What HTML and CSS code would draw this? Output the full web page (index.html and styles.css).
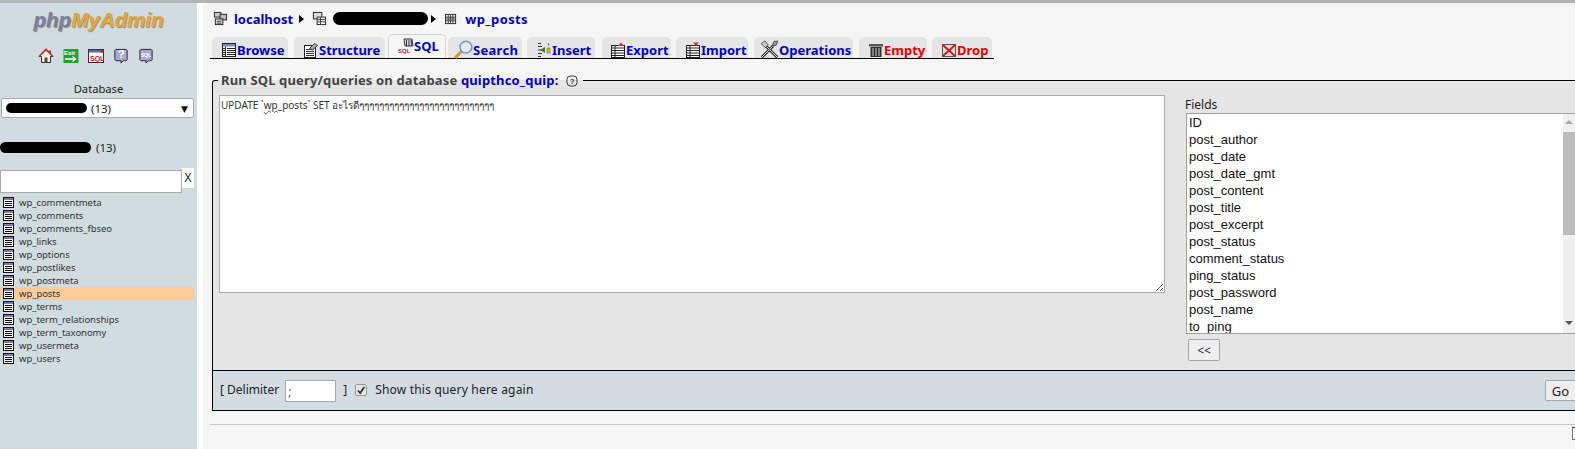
FILE: index.html
```html
<!DOCTYPE html>
<html lang="en">
<head>
<meta charset="utf-8">
<title>phpMyAdmin</title>
<link rel="stylesheet" href="styles.css">
</head>
<body>
<svg class="defs" width="0" height="0" aria-hidden="true">
  <symbol id="i-table" viewBox="0 0 11 11"><rect x=".5" y=".5" width="10" height="10" fill="#fff" stroke="#111"/><rect x="1" y="1" width="9" height="2" fill="#7a7ab4"/><path d="M2 4.500h7M2 6.500h7M2 8.500h7" stroke="#000"/></symbol>
  <symbol id="i-list" viewBox="0 0 16 16"><rect x="1.500" y="1.500" width="13" height="13" fill="#fff" stroke="#222"/><path d="M6 6.500h8M6 8.500h8M6 10.500h8M6 12.500h8M2 6.500h2M2 8.500h2M2 10.500h2M2 12.500h2" stroke="#222"/><path d="M4.500 4v10" stroke="#333"/><rect x="2" y="2" width="12" height="2.500" fill="#7c8fc0"/></symbol>
  <symbol id="i-bubble" viewBox="0 0 16 17"><path d="M2.500 1.500h11l1 1v10l-1 1h-3l-2.500 2.500v-2.500h-5.500l-1-1v-10z" fill="#a8a8d8" stroke="#222"/></symbol>
</svg>
<div class="page">
  <aside class="side">
    <div class="logo"><span class="php">php</span><span class="my">MyAdmin</span></div>
    <div class="tools">
      <svg class="tool" viewBox="0 0 16 16"><path d="M8 1.500 1 8.500h2.500v6h9v-6H15z" fill="#f4efe4" stroke="#333"/><path d="M11 2.500h2v3.500h-2z" fill="#8a3a2c"/><path d="M1.500 8 8 1.500 14.500 8" fill="none" stroke="#b8352a" stroke-width="1.700"/><rect x="6.500" y="9.500" width="3" height="5" fill="#5b4a34"/></svg>
      <svg class="tool" viewBox="0 0 16 16"><rect x=".5" y="1" width="15" height="14" fill="#1fa32f"/><text x="1" y="6.800" class="exit">Exit</text><path d="M2 11h10M9.500 8.500 12.500 11l-3 2.500" fill="none" stroke="#fff" stroke-width="1.300"/></svg>
      <svg class="tool" viewBox="0 0 16 16"><rect x=".5" y="1.500" width="15" height="13" fill="#fff" stroke="#333"/><rect x="1" y="2" width="14" height="2.500" fill="#5a6aa8"/><rect x="12.500" y="2" width="2.500" height="2.500" fill="#c0272d"/><text x="2" y="12.500" class="sqlt">SQL</text></svg>
      <svg class="tool" viewBox="0 0 16 17"><use href="#i-bubble"/><text x="4.500" y="11" class="helpt">?</text></svg>
      <svg class="tool" viewBox="0 0 16 17"><use href="#i-bubble"/><text x="2.300" y="9.500" class="bubt">SQL</text></svg>
    </div>
    <div class="db-label">Database</div>
    <div class="db-select"><span class="blob blob-sel"></span><span>(13)</span><span class="caret">▼</span></div>
    <div class="db-name"><span class="blob blob-db"></span><span>(13)</span></div>
    <div class="filter"><div class="filter-box"></div><div class="filter-x">X</div></div>
    <ul class="tables">
      <li><svg class="ti"><use href="#i-table"/></svg>wp_commentmeta</li>
      <li><svg class="ti"><use href="#i-table"/></svg>wp_comments</li>
      <li><svg class="ti"><use href="#i-table"/></svg>wp_comments_fbseo</li>
      <li><svg class="ti"><use href="#i-table"/></svg>wp_links</li>
      <li><svg class="ti"><use href="#i-table"/></svg>wp_options</li>
      <li><svg class="ti"><use href="#i-table"/></svg>wp_postlikes</li>
      <li><svg class="ti"><use href="#i-table"/></svg>wp_postmeta</li>
      <li class="on"><svg class="ti"><use href="#i-table"/></svg>wp_posts</li>
      <li><svg class="ti"><use href="#i-table"/></svg>wp_terms</li>
      <li><svg class="ti"><use href="#i-table"/></svg>wp_term_relationships</li>
      <li><svg class="ti"><use href="#i-table"/></svg>wp_term_taxonomy</li>
      <li><svg class="ti"><use href="#i-table"/></svg>wp_usermeta</li>
      <li><svg class="ti"><use href="#i-table"/></svg>wp_users</li>
    </ul>
  </aside>
  <main class="main">
    <div class="crumbs">
      <svg class="ci" viewBox="0 0 16 16"><rect x="1.500" y="1.500" width="7" height="5" fill="#ccc" stroke="#222"/><rect x="7.500" y="3.500" width="7" height="6" fill="#bbb" stroke="#222"/><rect x="2.500" y="8.500" width="8" height="6" fill="#ddd" stroke="#222"/><path d="M4 11h5M4 13h5" stroke="#333"/></svg>
      <a class="crumb">localhost</a><span class="sep"></span>
      <svg class="ci ci-db" viewBox="0 0 16 16"><rect x="1.500" y="1.500" width="9" height="7" fill="#ddd" stroke="#222"/><rect x="5.500" y="6.500" width="9" height="8" fill="#fff" stroke="#222"/><path d="M6 9h8M6 11.500h8M9 7v7" stroke="#333"/></svg>
      <span class="blob blob-crumb"></span><span class="sep sep2"></span>
      <svg class="ci ci-tb" viewBox="0 0 13 13"><rect x=".5" y="1.500" width="11" height="10" fill="#fff" stroke="#222"/><path d="M1 4.500h10M1 6.500h10M1 8.500h10M3.500 2v9M6 2v9M8.500 2v9" stroke="#333"/></svg>
      <a class="crumb crumb-wide">wp_posts</a>
    </div>
    <ul class="tabs">
      <li class="tab t-browse"><svg class="ic"><use href="#i-list"/></svg>Browse</li>
      <li class="tab t-struct"><svg class="ic" viewBox="0 0 16 16"><rect x="1.500" y="3.500" width="11" height="12" fill="#fff" stroke="#222"/><path d="M3 7.500h8M3 9.500h8M3 11.500h8M3 13.500h8" stroke="#333"/><path d="M6.500 6.500 11.500 1.500l3 2-5 4.500z" fill="#aaa" stroke="#222" stroke-width=".8"/></svg>Structure</li>
      <li class="tab tab-on t-sql"><svg class="ic" viewBox="0 0 16 16"><path d="M6 1h8l1 7H7z" fill="#dde" stroke="#333"/><path d="M8.500 2v6M11 2v6M13.300 2v6" stroke="#333"/><text x="0" y="15" class="tabsql">SQL</text></svg>SQL</li>
      <li class="tab t-search"><svg class="ic ic-big" viewBox="0 0 16 16"><path d="M6.500 9.500 1 15" stroke="#d09a3a" stroke-width="2.600"/><circle cx="10" cy="6" r="5" fill="#dcecfb" stroke="#6f94bf" stroke-width="1.200"/></svg>Search</li>
      <li class="tab t-insert"><svg class="ic" viewBox="0 0 16 16"><path d="M2 1.500h3M2 4.500h4M2 8h5M2 11.500h4M2 14.500h3" stroke="#333"/><path d="M4 8l5-3v6z" fill="#3a7a3a"/><rect x="11" y="6" width="3" height="5" fill="#e6b325" stroke="#555" stroke-width=".5"/><path d="M12.500 1.500v2" stroke="#4a6fc0" stroke-width="1.500"/></svg>Insert</li>
      <li class="tab t-export"><svg class="ic" viewBox="0 0 16 16"><rect x="1.500" y="3.500" width="13" height="12" fill="#fff" stroke="#222"/><path d="M2 6h12M2 8.500h12M2 11h12M2 13.500h12M5 4v11" stroke="#222"/><path d="M8 4l3-3.500L14 4z" fill="#c0392b"/></svg>Export</li>
      <li class="tab t-import"><svg class="ic" viewBox="0 0 16 16"><rect x="1.500" y="3.500" width="13" height="12" fill="#fff" stroke="#222"/><path d="M2 6h12M2 8.500h12M2 11h12M2 13.500h12M5 4v11" stroke="#222"/><path d="M8 .5l3 3.500 3-3.500z" fill="#c0392b"/></svg>Import</li>
      <li class="tab t-ops"><svg class="ic ic-big" viewBox="0 0 16 16"><path d="M1.500 14.500 11 5M14.500 14.500 5 5" stroke="#333" stroke-width="2.400"/><path d="M1.500 14.500 11 5M14.500 14.500 5 5" stroke="#ddd" stroke-width=".8"/><path d="M10 5 12 1h3l-1.500 3.500z" fill="#999" stroke="#222" stroke-width=".6"/><path d="M1 3 4 .8l3 3.500L4.500 6.500z" fill="#ccc" stroke="#222" stroke-width=".6"/></svg>Operations</li>
      <li class="tab tab-red t-empty"><svg class="ic" viewBox="0 0 16 16"><rect x="1" y="2" width="14" height="2.500" fill="#555"/><rect x="2.500" y="5" width="11" height="10" fill="#333"/><path d="M5 6v8M8 6v8M11 6v8" stroke="#ccc"/></svg>Empty</li>
      <li class="tab tab-red t-drop"><svg class="ic" viewBox="0 0 16 16"><rect x="1.500" y="2.500" width="13" height="12" fill="#ddd" stroke="#555"/><path d="M2 3l12 11M14 3 2 14" stroke="#d01c1c" stroke-width="2"/></svg>Drop</li>
    </ul>
    <fieldset class="query">
      <legend class="legend">Run SQL query/queries on database <a class="dbname">quipthco_quip:</a> <svg class="qm" viewBox="0 0 12 12"><rect x="1" y="1" width="10" height="10" rx="3.500" fill="none" stroke="#333"/><text x="3.800" y="9.300" class="qmt">?</text></svg></legend>
      <div class="query-body">
        <div class="sqlbox">UPDATE `<span class="typo">wp</span>_posts` SET อะไรดีๆๆๆๆๆๆๆๆๆๆๆๆๆๆๆๆๆๆๆๆๆๆๆๆๆๆๆ</div>
        <div class="fields">
          <div class="fields-label">Fields</div>
          <div class="listbox">
            <ul class="options">
              <li>ID</li><li>post_author</li><li>post_date</li><li>post_date_gmt</li><li>post_content</li><li>post_title</li><li>post_excerpt</li><li>post_status</li><li>comment_status</li><li>ping_status</li><li>post_password</li><li>post_name</li><li>to_ping</li>
            </ul>
            <div class="scrollbar"><span class="arrow-up"></span><span class="thumb"></span><span class="arrow-down"></span></div>
          </div>
          <div class="btn btn-add">&lt;&lt;</div>
        </div>
      </div>
    </fieldset>
    <div class="footer">
      <span class="ft">[ Delimiter</span>
      <div class="delim">;</div>
      <span class="ft">]</span>
      <span class="check"><svg viewBox="0 0 10 10"><path d="M2 5.500 4.200 8 8.300 2" fill="none" stroke="#333" stroke-width="1.800"/></svg></span>
      <span class="ft show">Show this query here again</span>
      <div class="btn btn-go">Go</div>
    </div>
    <div class="rule"><span class="corner"></span></div>
  </main>
</div>
</body>
</html>
```
FILE: styles.css
```css
* { box-sizing: border-box; }
html, body { margin: 0; padding: 0; height: 449px; overflow: hidden; background: #f5f5f5; }
body { font-family: "Noto Sans", "DejaVu Sans", sans-serif; font-size: 12px; color: #222; }
ul { list-style: none; margin: 0; padding: 0; }
.defs { position: absolute; }
.page { display: flex; height: 449px; border-top: 3px solid #b4b4b4; }

.side { width: 203px; flex: none; background: #d0dce0; border-right: 6px solid #fff; height: 446px; overflow: hidden; }
.logo { height: 36px; padding-top: 4px; text-align: center; font: italic bold 20.500px/26px "Liberation Sans", sans-serif; text-shadow: 1px 1px 1px #888; }
.php { color: #7b7f9e; }
.my { color: #e5a537; }
.tools { display: flex; justify-content: center; gap: 9px; margin-top: 9px; padding-right: 6px; }
.tool { width: 16px; height: 16px; flex: none; }
.exit { font: bold 6px "Liberation Sans", sans-serif; fill: #fff; }
.sqlt { font: bold 7px "Liberation Sans", sans-serif; fill: #b01e1e; }
.helpt { font: bold 12px "Liberation Sans", sans-serif; fill: #fff; }
.bubt { font: bold 5.500px "Liberation Sans", sans-serif; fill: #fff; }
.db-label { text-align: center; margin-top: 17px; line-height: 16px; height: 17px; font-size: 11.200px; }
.db-select { display: flex; align-items: center; gap: 4px; width: 193px; height: 20px; margin-left: 1px; padding-left: 4px; background: #fff; border: 1px solid #aaa; border-radius: 2px; font-size: 11.500px; }
.caret { margin-left: auto; margin-right: 5px; font-size: 9px; color: #111; }
.blob { display: inline-block; background: #000; border-radius: 8px; }
.blob-sel { width: 81px; height: 10px; }
.db-name { display: flex; align-items: center; gap: 5px; margin-top: 21px; height: 16px; font-size: 11.500px; }
.blob-db { width: 91px; height: 11px; }
.filter { display: flex; align-items: flex-start; margin-top: 13px; height: 25px; }
.filter-box { width: 182px; height: 23px; margin-top: 2px; background: #fff; border: 1px solid #aaa; }
.filter-x { width: 12px; height: 20px; background: #fff; font-size: 12px; line-height: 20px; text-align: center; }
.tables { margin-top: 3px; font-size: 9.500px; letter-spacing: -.05px; color: #333; }
.tables li { display: flex; align-items: center; height: 13px; gap: 6px; padding-left: 3px; width: 194px; white-space: nowrap; }
.tables li.on { background: #ffcc99; }
.ti { width: 11px; height: 11px; flex: none; margin-right: -1px; }

.main { flex: 1; min-width: 0; padding: 0 0 0 7px; height: 446px; overflow: hidden; }
.crumbs { display: flex; align-items: center; height: 21px; margin-top: 5px; }
.crumb { font-weight: 700; font-size: 13px; color: #0000c0; white-space: nowrap; }
.crumb-wide { letter-spacing: .4px; }
.ci { width: 15px; height: 15px; flex: none; margin: 0 6px 0 3px; }
.sep { width: 0; height: 0; border-left: 5px solid #000; border-top: 4.500px solid transparent; border-bottom: 4.500px solid transparent; margin: 0 6px 0 6px; flex: none; }
.ci-db { margin: 0 6px 0 2px; }
.blob-crumb { width: 95px; height: 13px; flex: none; }
.sep2 { margin: 0 9px 0 3px; }
.ci-tb { width: 12px; height: 12px; margin: 0 8px 0 0; }

.tabs { display: flex; align-items: flex-end; height: 30px; width: 784px; border-bottom: 1px solid #000; }
.tab { display: flex; align-items: center; height: 21px; gap: 0; margin-left: 6px; padding: 4px 0 0 9px; background: #e5e5e5; border-radius: 5px 5px 0 0; font-weight: 700; font-size: 13px; color: #0000c0; white-space: nowrap; flex: none; }
.tab-on { height: 24px; background: #f5f5f5; border: 1px solid #d4d4d4; border-bottom: 0; padding: 0 0 1px 9px; }
.tab-red { color: #e00000; }
.t-browse { width: 76px; margin-left: 2px; }
.t-struct { width: 91px; }
.t-sql { width: 58px; margin-left: 3px; }
.t-search { width: 74px; margin-left: 2px; letter-spacing: .3px; padding-left: 6px; }
.t-insert { width: 68px; margin-left: 5px; }
.t-export { width: 69px; margin-left: 7px; padding-left: 8px; }
.t-import { width: 72px; margin-left: 5px; }
.t-ops { width: 99px; padding-left: 6px; }
.t-empty { width: 68px; }
.t-drop { width: 60px; margin-left: 5px; padding-left: 9px; }
.ic { width: 16px; height: 16px; flex: none; }
.ic-big { width: 19px; height: 19px; }
.tabsql { font: bold 6px "Liberation Sans", sans-serif; fill: #c0272d; }

.query { margin: 13px -40px 0 2px; padding: 0; min-width: 0; height: 298px; border: 1px solid #000; border-bottom: 0; border-radius: 3px 0 0 0; background: #e5e5e5; }
.legend { margin-left: 5px; padding: 0 5px 0 3px; font-weight: 700; font-size: 13px; line-height: 16px; letter-spacing: .15px; color: #444; white-space: nowrap; }
.dbname { color: #0000c0; }
.qm { width: 12px; height: 12px; margin-left: 4px; vertical-align: -2px; }
.qmt { font: bold 8px "Liberation Sans", sans-serif; fill: #333; }
.query-body { display: grid; grid-template-columns: 946px 1fr; column-gap: 21px; padding: 0 0 0 6px; }
.sqlbox { height: 198px; margin-top: 7px; padding: 2px 1px; background: #fff; border: 1px solid #aaa; font-size: 10px; color: #333; resize: both; overflow: hidden; white-space: nowrap; }
.typo { text-decoration: underline wavy #d03030 1px; }
.fields { display: flex; flex-direction: column; align-items: flex-start; margin-top: 8px; }
.fields-label { font-size: 12px; line-height: 17px; height: 17px; margin-left: -1px; }
.listbox { display: flex; width: 389px; height: 221px; background: #fff; border: 1px solid #a0a0a0; border-right: 0; overflow: hidden; }
.options { width: 376px; flex: none; font: 13px/17px "Liberation Sans", sans-serif; color: #111; padding: 0 0 0 2px; }
.options li { height: 17px; }
.scrollbar { display: flex; flex-direction: column; align-items: center; width: 12px; background: #f0f0f0; padding-top: 6px; }
.arrow-up { border-bottom: 4px solid #a8a8a8; border-left: 4px solid transparent; border-right: 4px solid transparent; }
.thumb { width: 12px; height: 103px; margin-top: 8px; background: #bcbcbc; }
.arrow-down { margin-top: 86px; border-top: 4px solid #555; border-left: 4px solid transparent; border-right: 4px solid transparent; }
.btn { display: flex; align-items: center; justify-content: center; background: #eee; border: 1px solid #a5a5a5; border-radius: 2px; font-size: 12px; color: #222; }
.btn-add { width: 32px; height: 22px; margin: 5px 0 0 2px; }

.footer { display: flex; align-items: center; height: 41px; margin: 0 -40px 0 2px; padding: 0 0 0 7px; border: 1px solid #000; background: #d3dbe3; white-space: nowrap; }
.ft { margin-bottom: 3px; }
.delim { width: 51px; height: 22px; margin: 0 7px 0 6px; padding: 2px 2px; background: #fff; border: 1px solid #aaa; font-size: 12px; color: #555; }
.check { display: flex; width: 12px; height: 12px; margin: 0 8px 1px 8px; background: #e4e4e4; border: 1px solid #999; border-radius: 2px; }
.show { letter-spacing: .2px; }
.btn-go { width: 69px; height: 21px; margin-left: auto; flex: none; font-size: 13px; padding-right: 38px; }
.rule { position: relative; height: 0; margin-top: 13px; border-top: 1px solid #c8c8c8; }
.corner { position: absolute; right: 0; top: 2px; width: 3px; height: 13px; background: #fff; border: 1px solid #777; border-right: 0; border-top-color: #334; }
```
